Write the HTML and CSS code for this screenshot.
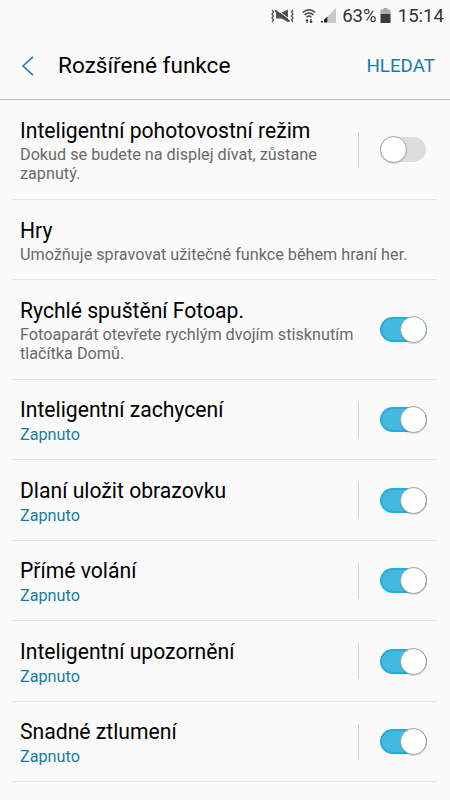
FILE: index.html
```html
<!DOCTYPE html>
<html lang="cs">
<head>
<meta charset="utf-8">
<title>Rozšířené funkce</title>
<link rel="stylesheet" href="styles.css">
</head>
<body>
<div class="status">
  <svg class="mute" width="23" height="16" viewBox="0 0 23 16" fill="none" stroke="#555" stroke-width="1.3">
    <path d="M1 2l1.500 2L1 6l1.500 2L1 10l1.500 2L1 14M22 2l-1.500 2L22 6l-1.500 2L22 10l-1.500 2L22 14"/>
    <path d="M5 5h4.500L17 1.500v12.500l-6.500-3.500H5z" fill="#555" stroke="none"/>
    <path d="M5 1.500L19 11.500" stroke="#fafafa" stroke-width="1"/>
    <path d="M4 2.500L18.500 13.500" stroke="#444" stroke-width="2"/>
  </svg>
  <svg class="wifi" width="14" height="16" viewBox="0 0 14 16" fill="none" stroke="#444" stroke-width="1.500">
    <path d="M.7 4.500Q7-1 13.300 4.500M2.600 6.900Q7 3 11.400 6.900M4.600 9.100Q7 7 9.400 9.100"/>
    <path d="M5 11.500v3.500M9 11v3.500" stroke-width="1.300"/><path d="M3.200 13L5 11l1.800 2zM7.200 13.200L9 15.200l1.800-2z" fill="#333" stroke="none"/>
  </svg>
  <svg class="signal" width="15" height="15" viewBox="0 0 15 15">
    <path d="M7 8l8-8v15H7z" fill="#c8c8c8"/><path d="M0 14.500v-1.500h2v1.500zM3 14.500V11.500L6.500 8.500v6z" fill="#222"/>
  </svg>
  <span class="percent">63%</span>
  <svg class="battery" width="11" height="15" viewBox="0 0 11 15">
    <path d="M3.500 0h4v1.500H10.500V6H.5V1.500h3z" fill="#aaa"/><path d="M.5 6h10v9H.5z" fill="#3b3b3b"/>
  </svg>
  <span class="clock">15:14</span>
</div>
<header class="header">
  <svg class="back" width="14" height="20" viewBox="0 0 14 20" fill="none" stroke="#2380ae" stroke-width="1.600"><path d="M12 .8L2 10l10 9.200"/></svg>
  <h1>Rozšířené funkce</h1>
  <span class="search">HLEDAT</span>
</header>
<main>
  <section class="row tall">
    <div class="text"><h2>Inteligentní pohotovostní režim</h2><p>Dokud se budete na displej dívat, zůstane<br>zapnutý.</p></div>
    <i class="divider"></i><div class="switch off"><i class="knob"></i></div>
  </section>
  <section class="row">
    <div class="text"><h2>Hry</h2><p>Umožňuje spravovat užitečné funkce během hraní her.</p></div>
  </section>
  <section class="row tall">
    <div class="text"><h2>Rychlé spuštění Fotoap.</h2><p>Fotoaparát otevřete rychlým dvojím stisknutím<br>tlačítka Domů.</p></div>
    <div class="switch"><i class="knob"></i></div>
  </section>
  <section class="row state">
    <div class="text"><h2>Inteligentní zachycení</h2><p class="on">Zapnuto</p></div>
    <i class="divider"></i><div class="switch"><i class="knob"></i></div>
  </section>
  <section class="row state plus">
    <div class="text"><h2>Dlaní uložit obrazovku</h2><p class="on">Zapnuto</p></div>
    <i class="divider"></i><div class="switch"><i class="knob"></i></div>
  </section>
  <section class="row state">
    <div class="text"><h2>Přímé volání</h2><p class="on">Zapnuto</p></div>
    <i class="divider"></i><div class="switch"><i class="knob"></i></div>
  </section>
  <section class="row state plus">
    <div class="text"><h2>Inteligentní upozornění</h2><p class="on">Zapnuto</p></div>
    <i class="divider"></i><div class="switch"><i class="knob"></i></div>
  </section>
  <section class="row state">
    <div class="text"><h2>Snadné ztlumení</h2><p class="on">Zapnuto</p></div>
    <i class="divider"></i><div class="switch"><i class="knob"></i></div>
  </section>
</main>
</body>
</html>
```
FILE: styles.css
```css
* { box-sizing: border-box; }
body { margin: 0; height: 800px; overflow: hidden; background: #fafafa; color: #000; font-family: Roboto, sans-serif; }
h1, h2, p { margin: 0; font-weight: 400; white-space: nowrap; }
.status { height: 31px; display: flex; align-items: center; justify-content: flex-end; padding-right: 6px; color: #333; font-size: 18.6px; }
.mute { margin-right: 8px; }
.wifi { margin-right: 5px; }
.signal { margin-right: 6px; }
.battery { margin: 0 7px 0 3px; }
.header { height: 69px; display: flex; align-items: center; padding: 0 15px 0 21px; border-bottom: 1px solid #bdbdbd; }
.back { margin-top: 1px; }
.header h1 { margin: 1px 0 0 23px; font-size: 22.6px; line-height: 30px; }
.search { margin: 1px 0 0 auto; color: #1b7cab; font-size: 18.8px; }
.row { height: 80px; margin: 0 13px; padding: 0 10px 0 7px; display: flex; align-items: center; border-bottom: 1px solid #e5e5e5; }
.tall { height: 100px; }
.plus { height: 81px; }
.text { flex: 1; min-width: 0; padding-top: 1px; }
h2 { font-size: 21.15px; line-height: 27px; }
p { margin-top: 1px; color: #696969; font-size: 16.22px; line-height: 19px; }
.state .text { padding-top: 3px; }
.plus .text { padding-top: 4px; }
.on { margin-top: 0; line-height: 24px; color: #147da5; }
.divider { width: 1px; height: 36px; margin-right: 21px; background: #d2d2d2; }
.switch { width: 47px; height: 25px; border-radius: 13px; background: #45bae0; border: 2px solid #21aed9; display: flex; justify-content: flex-end; align-items: center; }
.knob { flex: none; width: 27px; height: 27px; margin-right: -2px; border-radius: 50%; background: #fff; border: 1px solid #a0a0a0; box-shadow: 0 1px 1px #0002; }
.off { width: 46px; margin-right: 1px; justify-content: flex-start; background: #ddd; border-color: #ddd; }
.off .knob { margin: 0 0 0 -2px; }
```
